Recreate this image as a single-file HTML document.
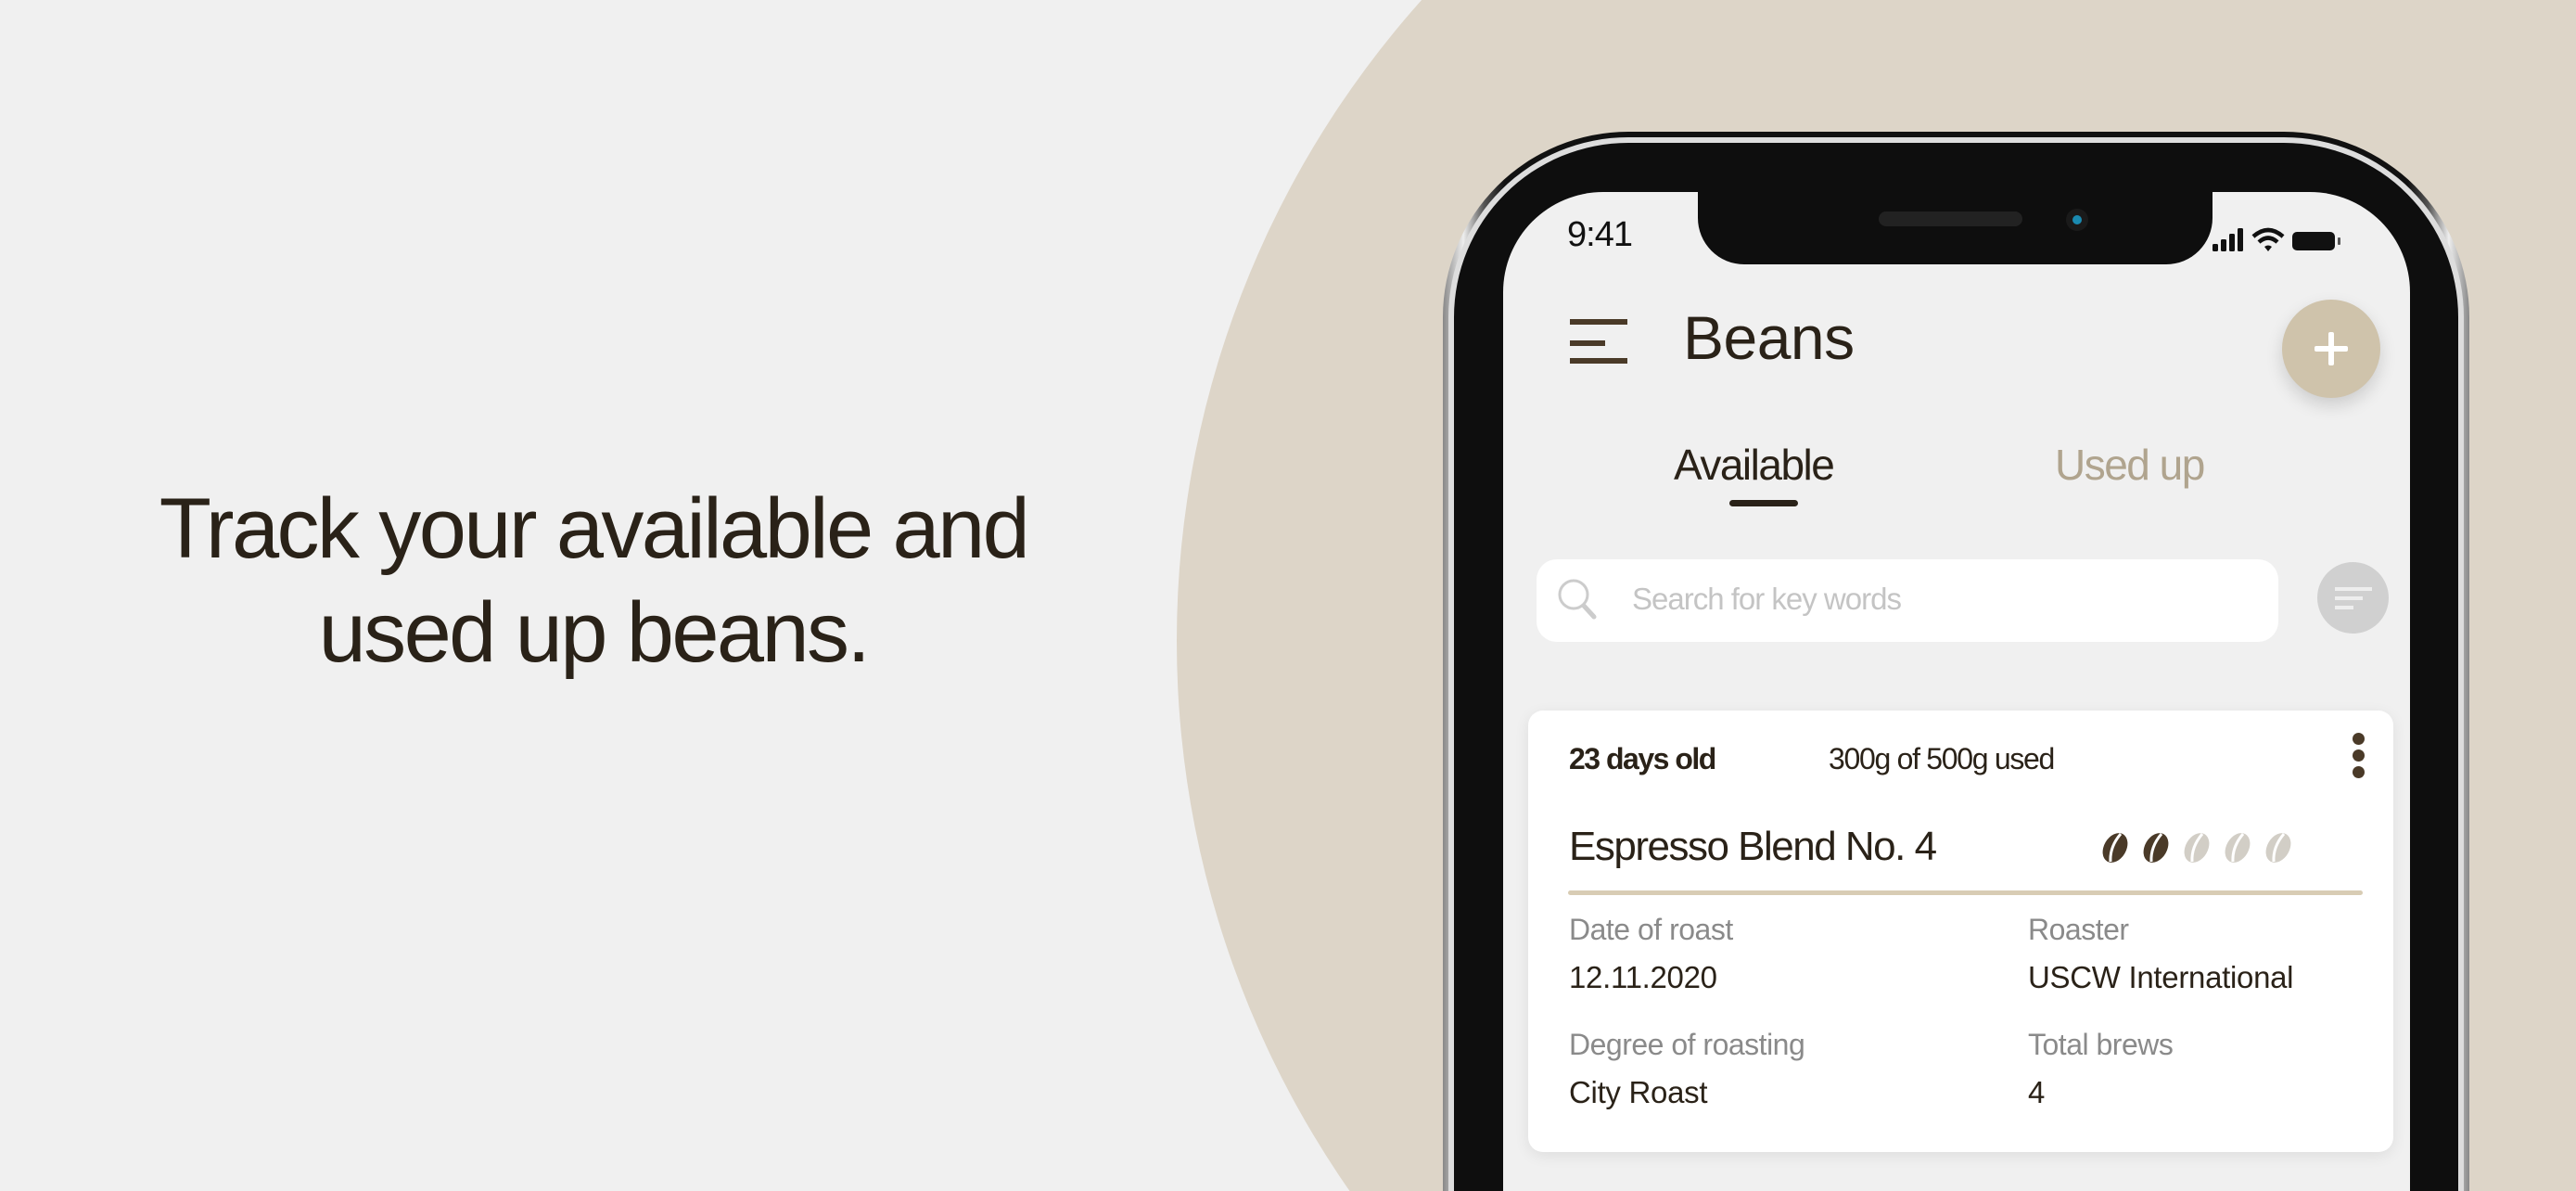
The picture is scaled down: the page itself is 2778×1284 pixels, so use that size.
<!DOCTYPE html>
<html style="width:2778px;height:1284px;overflow:hidden"><head><meta charset="utf-8"><style>
*{margin:0;padding:0;box-sizing:border-box}
html,body{width:2778px;height:1284px;overflow:hidden}
body{background:#f0f0f0;font-family:"Liberation Sans",sans-serif;color:#2a2218}
#w{position:relative;width:2778px;height:1284px;overflow:hidden}
.a{position:absolute}
.circle{left:0;top:0;width:2778px;height:1284px;background:#ddd5c8;clip-path:circle(1036px at 2305px 691px)}
.h{left:0;width:1280px;text-align:center;font-size:92px;letter-spacing:-2.6px;line-height:112px;top:514px;color:#2a2218}
.frame{left:1556px;top:142px;width:1107px;height:1142px;border-radius:200px 200px 0 0;background:linear-gradient(90deg,#888,#eee 2%,#555 4%,#111 6%,#111 94%,#555 96%,#eee 98%,#888)}
.frame2{position:absolute;left:6px;top:6px;right:6px;bottom:0;border-radius:194px 194px 0 0;border:6px solid #ddd;border-bottom:none;background:#0e0e0e}
.screen{left:1621px;top:207px;width:978px;height:1077px;border-radius:108px 108px 0 0;background:#f0f0f0;overflow:hidden}
.notch{left:1831px;top:200px;width:555px;height:85px;background:#0e0e0e;border-radius:0 0 50px 50px}
.lbl{font-size:32px;color:#8a8a8a;letter-spacing:-0.5px}
.val{font-size:33px;color:#2a2218;letter-spacing:-0.3px}
</style></head><body><div id="w">
<div class="a circle"></div>
<div class="a h">Track your available and<br>used up beans.</div>
<div class="a frame"><div class="frame2"></div></div>
<div class="a screen"></div>
<div class="a notch"></div>
<div class="a" style="left:2026px;top:228px;width:155px;height:16px;border-radius:8px;background:#222"></div>
<div class="a" style="left:2228px;top:225px;width:24px;height:24px;border-radius:50%;background:#1a1a1a"><div class="a" style="left:7px;top:7px;width:10px;height:10px;border-radius:50%;background:#1a8ab0"></div></div>
<div class="a" style="left:1690px;top:232px;font-size:38px;letter-spacing:-1px;color:#111">9:41</div>
<svg class="a" style="left:2386px;top:243px" width="180" height="32" viewBox="0 0 180 32">
<rect x="0" y="20" width="6" height="8" rx="1.5" fill="#111"/><rect x="9" y="15" width="6" height="13" rx="1.5" fill="#111"/><rect x="18" y="9" width="6" height="19" rx="1.5" fill="#111"/><rect x="27" y="3" width="6" height="25" rx="1.5" fill="#111"/>
<path d="M44 12 Q60 -2 76 12" stroke="#111" stroke-width="4.5" fill="none"/><path d="M50 18 Q60 9 70 18" stroke="#111" stroke-width="4.5" fill="none"/><path d="M56 23 L60 28 L64 23 Q60 20 56 23Z" fill="#111"/>
<rect x="86" y="7" width="46" height="20" rx="5" fill="#111"/><rect x="135" y="13" width="3" height="8" rx="1" fill="#555"/>
</svg>
<div class="a" style="left:1693px;top:344px;width:62px;height:6px;background:#4a3a28"></div>
<div class="a" style="left:1693px;top:367px;width:38px;height:6px;background:#4a3a28"></div>
<div class="a" style="left:1693px;top:386px;width:62px;height:6px;background:#4a3a28"></div>
<div class="a" style="left:1815px;top:326px;font-size:66px;letter-spacing:-0.5px;color:#2a2218">Beans</div>
<div class="a" style="left:2461px;top:323px;width:106px;height:106px;border-radius:50%;background:#cfc3ab;box-shadow:0 8px 18px rgba(0,0,0,.15)"></div>
<div class="a" style="left:2496px;top:373px;width:36px;height:6px;background:#fff;border-radius:2px"></div>
<div class="a" style="left:2511px;top:358px;width:6px;height:36px;background:#fff;border-radius:2px"></div>
<div class="a" style="left:1805px;top:474px;font-size:46px;letter-spacing:-1.5px;color:#2a2218">Available</div>
<div class="a" style="left:1865px;top:539px;width:74px;height:7px;border-radius:4px;background:#2a2218"></div>
<div class="a" style="left:2216px;top:474px;font-size:46px;letter-spacing:-1.5px;color:#b0a48e">Used up</div>
<div class="a" style="left:1657px;top:603px;width:800px;height:89px;border-radius:22px;background:#fff"></div>
<svg class="a" style="left:1678px;top:622px" width="48" height="48" viewBox="0 0 48 48"><circle cx="19" cy="19" r="15" stroke="#ccc" stroke-width="3" fill="none"/><path d="M30 31 L41 43" stroke="#ccc" stroke-width="5" stroke-linecap="round"/></svg>
<div class="a" style="left:1760px;top:627px;font-size:33px;letter-spacing:-1px;color:#c4c4c4">Search for key words</div>
<div class="a" style="left:2499px;top:606px;width:77px;height:77px;border-radius:50%;background:#d0d0d0"></div>
<div class="a" style="left:2518px;top:633px;width:40px;height:4px;background:#eee"></div>
<div class="a" style="left:2518px;top:643px;width:30px;height:4px;background:#eee"></div>
<div class="a" style="left:2518px;top:653px;width:20px;height:4px;background:#eee"></div>
<div class="a" style="left:1648px;top:766px;width:933px;height:476px;border-radius:16px;background:#fff;box-shadow:0 4px 16px rgba(0,0,0,.08)"></div>
<div class="a" style="left:1692px;top:800px;font-size:32px;font-weight:bold;letter-spacing:-1.5px">23 days old</div>
<div class="a" style="left:1972px;top:800px;font-size:32px;letter-spacing:-1.3px">300g of 500g used</div>
<div class="a" style="left:2537px;top:790px;width:13px;height:13px;border-radius:50%;background:#4a3a28"></div>
<div class="a" style="left:2537px;top:808px;width:13px;height:13px;border-radius:50%;background:#4a3a28"></div>
<div class="a" style="left:2537px;top:826px;width:13px;height:13px;border-radius:50%;background:#4a3a28"></div>
<div class="a" style="left:1692px;top:888px;font-size:44px;letter-spacing:-1.5px">Espresso Blend No. 4</div>
<svg class="a" style="left:2262px;top:895px" width="222" height="38" viewBox="0 0 222 38">
<g><ellipse cx="19" cy="19" rx="12" ry="17" transform="rotate(30 19 19)" fill="#4a3a28"/><path d="M25 4 Q13 18 14 34" stroke="#fff" stroke-width="3" fill="none"/></g>
<g transform="translate(44 0)"><ellipse cx="19" cy="19" rx="12" ry="17" transform="rotate(30 19 19)" fill="#4a3a28"/><path d="M25 4 Q13 18 14 34" stroke="#fff" stroke-width="3" fill="none"/></g>
<g transform="translate(88 0)"><ellipse cx="19" cy="19" rx="12" ry="17" transform="rotate(30 19 19)" fill="#d2cec6"/><path d="M25 4 Q13 18 14 34" stroke="#fff" stroke-width="3" fill="none"/></g>
<g transform="translate(132 0)"><ellipse cx="19" cy="19" rx="12" ry="17" transform="rotate(30 19 19)" fill="#d2cec6"/><path d="M25 4 Q13 18 14 34" stroke="#fff" stroke-width="3" fill="none"/></g>
<g transform="translate(176 0)"><ellipse cx="19" cy="19" rx="12" ry="17" transform="rotate(30 19 19)" fill="#d2cec6"/><path d="M25 4 Q13 18 14 34" stroke="#fff" stroke-width="3" fill="none"/></g>
</svg>
<div class="a" style="left:1691px;top:960px;width:857px;height:5px;border-radius:3px;background:#d8ccb4"></div>
<div class="a lbl" style="left:1692px;top:984px">Date of roast</div>
<div class="a val" style="left:1692px;top:1035px">12.11.2020</div>
<div class="a lbl" style="left:2187px;top:984px">Roaster</div>
<div class="a val" style="left:2187px;top:1035px">USCW International</div>
<div class="a lbl" style="left:1692px;top:1108px">Degree of roasting</div>
<div class="a val" style="left:1692px;top:1159px">City Roast</div>
<div class="a lbl" style="left:2187px;top:1108px">Total brews</div>
<div class="a val" style="left:2187px;top:1159px">4</div>
</div></body></html>
